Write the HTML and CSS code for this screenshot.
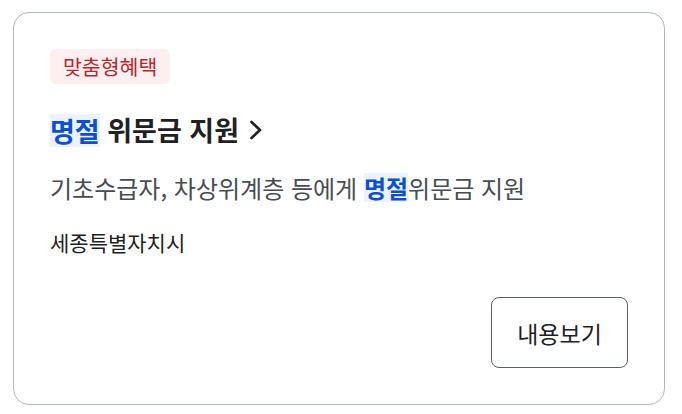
FILE: index.html
```html
<!DOCTYPE html>
<html lang="ko">
<head>
<meta charset="utf-8">
<link rel="stylesheet" href="styles.css">
</head>
<body>
<div class="card">
  <div class="badge">맞춤형혜택</div>
  <h2 class="title"><span class="hl">명절</span> 위문금 지원<svg class="chev" width="14" height="20" viewBox="0 0 14 20"><polyline points="2.5,2 11,10 2.5,18" fill="none" stroke="#1e2124" stroke-width="2.6" stroke-linecap="round" stroke-linejoin="round"/></svg></h2>
  <p class="desc">기초수급자, 차상위계층 등에게 <span class="hl">명절</span>위문금 지원</p>
  <p class="region">세종특별자치시</p>
  <div class="actions"><button class="btn">내용보기</button></div>
</div>
</body>
</html>
```
FILE: styles.css
```css
html, body { margin: 0; padding: 0; background: #fff; }
body { font-family: "Noto Sans CJK KR", "Noto Sans", sans-serif; color: #1e2124; }
.card {
  box-sizing: border-box;
  margin: 12px 0 0 13px;
  width: 652px;
  height: 393px;
  border: 1px solid #b1b8be;
  border-radius: 16px;
  padding: 36px;
  display: flex;
  flex-direction: column;
}
.badge {
  align-self: flex-start;
  height: 35px;
  line-height: 35px;
  padding: 0 13px;
  border-radius: 6px;
  background: #fdeff0;
  color: #b8262f;
  font-size: 20.5px;
}
.title {
  margin: 28px 0 0;
  font-size: 27px;
  font-weight: 700;
  line-height: 36px;
  display: flex;
  align-items: center;
  white-space: pre;
}
.hl { background: #ecf2fe; color: #0b50d0; font-weight: 700; }
.title .hl { display: inline-block; line-height: 33px; }
.desc .hl { display: inline-block; line-height: 29px; }
.chev { margin-left: 10px; }
.desc {
  margin: 23px 0 0;
  font-size: 24px;
  line-height: 34px;
  color: #464c53;
}
.region {
  margin: 22px 0 0;
  font-size: 21px;
  line-height: 30px;
  font-weight: 400;
  color: #1e2124;
}
.actions { margin-top: auto; display: flex; justify-content: flex-end; }
.btn {
  width: 137px;
  height: 71px;
  border: 1px solid #58616a;
  border-radius: 8px;
  background: #fff;
  font-family: inherit;
  font-size: 23px;
  color: #1e2124;
  padding: 0;
}
```
